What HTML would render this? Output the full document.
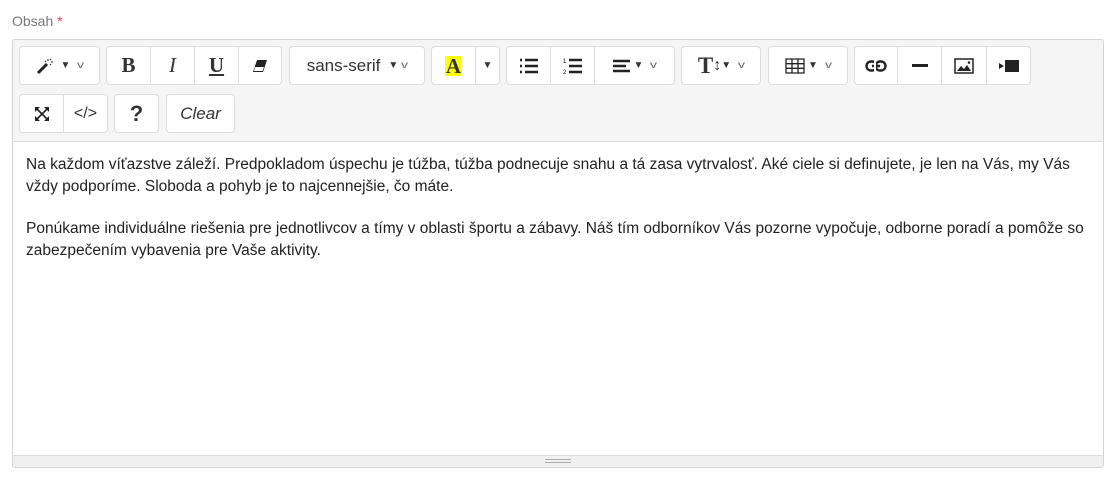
<!DOCTYPE html>
<html><head><meta charset="utf-8"><style>
body{margin:0;width:1117px;height:480px;background:#fff;font-family:"Liberation Sans",Arial,sans-serif;position:relative;overflow:hidden}
.lbl{position:absolute;left:12px;top:13px;font-size:14px;color:#777}
.lbl span{color:#e04848}
.box{position:absolute;left:12px;top:39px;width:1090px;height:427px;border:1px solid #d4d4d4;border-radius:3px;overflow:hidden}
.tb{position:absolute;left:0;top:0;width:1090px;height:101px;background:#f5f5f5;border-bottom:1px solid #ddd}
.b{position:absolute;height:39px;background:#fff;border:1px solid #ddd;box-sizing:border-box;display:flex;align-items:center;justify-content:center;color:#333;font-size:15px}
.r1{top:6px}.r2{top:54px}
.rl{border-radius:4px 0 0 4px}.rr{border-radius:0 4px 4px 0}.ra{border-radius:4px}
.car{font-size:10px;margin-left:3px}
.chev{font-size:10px;color:#666;margin-left:8px;transform:scaleX(1.4)}
.ed{position:absolute;left:26px;top:154px;width:1066px;font-size:15.5px;line-height:22px;color:#222}
.ed p{margin:0 0 20px 0}
.rs{position:absolute;left:0;bottom:0;width:1090px;height:11px;background:#f0f0f0;border-top:1px solid #ddd}
.rs:after{content:"";position:absolute;left:532px;top:3px;width:26px;height:2px;border-top:1px solid #aaa;border-bottom:1px solid #aaa}
</style></head><body>
<div class="lbl">Obsah <span>*</span></div>
<div class="box">
<div class="tb">
<div class="b r1 ra" style="left:6px;width:81px"><svg width="22" height="18" viewBox="0 0 22 18"><path d="M2 16 L11 7" stroke="#222" stroke-width="3"/><path d="M12 2v2M15 5h2M14 3l1-1M9 4l1 1M14 7l1 1" stroke="#222" stroke-width="1"/></svg><span class="car">▼</span><span class="chev">v</span></div>
<div class="b r1 rl" style="left:93px;width:45px;font:bold 21px 'Liberation Serif',serif">B</div>
<div class="b r1" style="left:137px;width:45px;font:italic 21px 'Liberation Serif',serif">I</div>
<div class="b r1" style="left:181px;width:45px;font:bold 21px 'Liberation Serif',serif;text-decoration:underline">U</div>
<div class="b r1 rr" style="left:225px;width:44px"><svg width="16" height="14" viewBox="0 0 16 14"><path d="M5 1h10l-4 12H1z" fill="#222"/><path d="M3 8h9l-1.5 4H2z" fill="#fff"/></svg></div>
<div class="b r1 ra" style="left:276px;width:136px;font-size:17px">sans-serif <span class="car" style="margin-left:8px">▼</span><span class="chev" style="margin-left:4px">v</span></div>
<div class="b r1 rl" style="left:418px;width:45px"><span style="background:#ff0;font:bold 21px 'Liberation Serif',serif;line-height:20px;padding:0 1px">A</span></div>
<div class="b r1 rr" style="left:462px;width:25px"><span class="car" style="margin:0">▼</span></div>
<div class="b r1 rl" style="left:493px;width:45px"><svg width="20" height="16" viewBox="0 0 20 16"><path d="M1 2h2M1 8h2M1 14h2M6 2h13M6 8h13M6 14h13" stroke="#222" stroke-width="2.4"/></svg></div>
<div class="b r1" style="left:537px;width:45px"><svg width="20" height="18" viewBox="0 0 20 18"><text x="0" y="6" font-size="6" font-family="Liberation Sans">1</text><text x="0" y="17" font-size="6" font-family="Liberation Sans">2</text><path d="M6 3h13M6 9h13M6 15h13" stroke="#222" stroke-width="2.4"/></svg></div>
<div class="b r1 rr" style="left:581px;width:81px"><svg width="18" height="14" viewBox="0 0 18 14"><path d="M0 2h17M0 7h13M0 12h17" stroke="#222" stroke-width="2.4"/></svg><span class="car">▼</span><span class="chev">v</span></div>
<div class="b r1 ra" style="left:668px;width:80px"><span style="font:bold 23px 'Liberation Serif',serif">T</span><span style="font-size:16px">↕</span><span class="car" style="margin:0">▼</span><span class="chev">v</span></div>
<div class="b r1 ra" style="left:755px;width:80px"><svg width="20" height="16" viewBox="0 0 20 16"><path d="M1 1h18v14H1zM1 5.7h18M1 10.3h18M7 1v14M13 1v14" stroke="#222" stroke-width="1.3" fill="none"/></svg><span class="car">▼</span><span class="chev">v</span></div>
<div class="b r1 rl" style="left:841px;width:44px"><svg width="22" height="12" viewBox="0 0 22 12"><rect x="1.5" y="1.5" width="10" height="9" rx="4.5" fill="none" stroke="#222" stroke-width="2.4"/><rect x="10.5" y="1.5" width="10" height="9" rx="4.5" fill="none" stroke="#222" stroke-width="2.4"/><path d="M7 6h8" stroke="#222" stroke-width="2.4"/><path d="M10 1v10" stroke="#fff" stroke-width="2"/></svg></div>
<div class="b r1" style="left:884px;width:45px"><svg width="16" height="4"><rect width="16" height="3" fill="#222"/></svg></div>
<div class="b r1" style="left:928px;width:46px"><svg width="20" height="16" viewBox="0 0 20 16"><rect x="1" y="1" width="18" height="14" fill="none" stroke="#222" stroke-width="1.5"/><path d="M3 13l4-5 3 3 3-4 4 6z" fill="#222"/><circle cx="15" cy="4.5" r="1.3" fill="#222"/></svg></div>
<div class="b r1 rr" style="left:973px;width:45px"><svg width="20" height="12" viewBox="0 0 20 12"><rect x="6" y="0" width="14" height="12" fill="#222"/><path d="M0 3l5 3-5 3z" fill="#222"/></svg></div>
<div class="b r2 rl" style="left:6px;width:45px"><svg width="16" height="16" viewBox="0 0 16 16"><path d="M2 2l12 12M14 2L2 14" stroke="#222" stroke-width="1.6"/><path d="M1 1h5L1 6zM15 1h-5l5 5zM1 15h5l-5-5zM15 15h-5l5-5z" fill="#222"/></svg></div>
<div class="b r2 rr" style="left:50px;width:45px;font-size:16px">&lt;/&gt;</div>
<div class="b r2 ra" style="left:101px;width:45px;font-weight:bold;font-size:22px">?</div>
<div class="b r2 ra" style="left:153px;width:69px;font-style:italic;font-size:17px">Clear</div>
</div>
<div class="rs"></div>
</div>
<div class="ed">
<p>Na každom víťazstve záleží. Predpokladom úspechu je túžba, túžba podnecuje snahu a tá zasa vytrvalosť. Aké ciele si definujete, je len na Vás, my Vás vždy podporíme. Sloboda a pohyb je to najcennejšie, čo máte.</p>
<p>Ponúkame individuálne riešenia pre jednotlivcov a tímy v oblasti športu a zábavy. Náš tím odborníkov Vás pozorne vypočuje, odborne poradí a pomôže so zabezpečením vybavenia pre Vaše aktivity.</p>
</div>
</body></html>
